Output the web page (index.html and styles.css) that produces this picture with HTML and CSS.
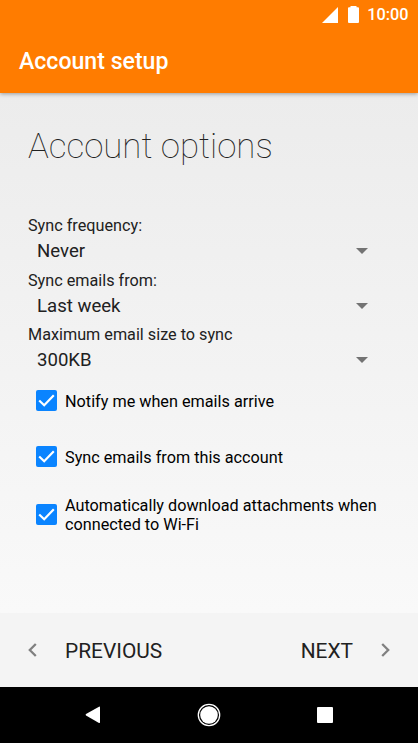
FILE: index.html
```html
<!DOCTYPE html>
<html lang="en">
<head>
<meta charset="utf-8">
<title>Account setup</title>
<link rel="stylesheet" href="styles.css">
</head>
<body>
<div class="screen">
  <header class="appbar">
    <div class="status">
      <svg class="signal" width="16" height="16" viewBox="0 0 16 16"><path d="M0 16 16 0V16Z"/></svg>
      <svg class="battery" width="11" height="17" viewBox="0 0 11 17"><path d="M2.5 0H8.5V1.2H10Q11 1.2 11 2.2V16Q11 17 10 17H1Q0 17 0 16V2.2Q0 1.2 1 1.2H2.5Z"/></svg>
      <span class="clock">10:00</span>
    </div>
    <div class="title"><span>Account setup</span></div>
  </header>
  <main class="content">
    <h1><span>Account options</span></h1>
    <section class="fields">
      <div class="field">
        <div class="label">Sync frequency:</div>
        <div class="select"><span>Never</span><svg width="12" height="6" viewBox="0 0 12 6"><path d="M0 0H12L6 6Z"/></svg></div>
      </div>
      <div class="field">
        <div class="label">Sync emails from:</div>
        <div class="select"><span>Last week</span><svg width="12" height="6" viewBox="0 0 12 6"><path d="M0 0H12L6 6Z"/></svg></div>
      </div>
      <div class="field">
        <div class="label">Maximum email size to sync</div>
        <div class="select"><span>300KB</span><svg width="12" height="6" viewBox="0 0 12 6"><path d="M0 0H12L6 6Z"/></svg></div>
      </div>
    </section>
    <section class="checks">
      <div class="check">
        <svg width="21" height="21" viewBox="0 0 21 21"><rect width="21" height="21" rx="2"/><path d="M3.2 10.5 8.2 15.3 17.8 5.3"/></svg>
        <span>Notify me when emails arrive</span>
      </div>
      <div class="check">
        <svg width="21" height="21" viewBox="0 0 21 21"><rect width="21" height="21" rx="2"/><path d="M3.2 10.5 8.2 15.3 17.8 5.3"/></svg>
        <span>Sync emails from this account</span>
      </div>
      <div class="check tall">
        <svg width="21" height="21" viewBox="0 0 21 21"><rect width="21" height="21" rx="2"/><path d="M3.2 10.5 8.2 15.3 17.8 5.3"/></svg>
        <span>Automatically download attachments when<br>connected to Wi-Fi</span>
      </div>
    </section>
  </main>
  <footer class="actions">
    <div class="action"><svg width="9" height="14" viewBox="0 0 9 14"><path d="M7.8 1 1.8 7 7.8 13"/></svg><span>PREVIOUS</span></div>
    <div class="action"><span>NEXT</span><svg width="9" height="14" viewBox="0 0 9 14"><path d="M1.2 1 7.2 7 1.2 13"/></svg></div>
  </footer>
  <nav class="navbar">
    <svg width="16" height="18" viewBox="0 0 16 18"><path d="M14 .7Q15 .3 15 1.4V16.2Q15 17.3 14 16.9L1 9.5Q.2 8.8 1 8.1Z"/></svg>
    <svg width="24" height="24" viewBox="0 0 24 24"><circle cx="12" cy="12" r="8.8"/><circle class="ring" cx="12" cy="12" r="10.7"/></svg>
    <svg width="16" height="16" viewBox="0 0 16 16"><rect width="16" height="16" rx="1"/></svg>
  </nav>
</div>
</body>
</html>
```
FILE: styles.css
```css
body {
  margin: 0;
  font-family: Roboto, "Liberation Sans", sans-serif;
  color: #212121;
}
svg { display: block; flex: none; }
.screen {
  width: 418px;
  height: 743px;
  display: flex;
  flex-direction: column;
  overflow: hidden;
  background: linear-gradient(#ececec 93px, #f9f9f9 613px);
}
.appbar {
  height: 93px;
  flex: none;
  background: #ff7c00;
  color: #fff;
  box-shadow: 0 1px 4px rgba(0, 0, 0, .35);
}
.status {
  height: 29px;
  display: flex;
  align-items: center;
  justify-content: flex-end;
  padding-right: 9.5px;
  box-sizing: border-box;
}
.status svg { fill: #fff; }
.signal { margin-right: 10px; }
.battery { margin-right: 8.5px; }
.clock { font-size: 16.25px; font-weight: 500; line-height: 29px; }
.title {
  padding-left: 19px;
  font-size: 23.1px;
  font-weight: 500;
  line-height: 65px;
}
.content { flex: 1; }
h1 {
  margin: 30px 0 0 28px;
  font-size: 34.83px;
  font-weight: 100;
  line-height: 48px;
}
.fields { margin-top: 45px; }
.field { height: 54.5px; }
.label {
  padding-left: 28px;
  font-size: 16.22px;
  line-height: 20px;
}
.select {
  display: flex;
  align-items: center;
  justify-content: space-between;
  padding: 0 50px 0 37px;
  font-size: 18.6px;
  line-height: 30px;
}
.select svg { fill: #737373; }
.checks { padding: 0 0 0 36px; margin-top: -7px; }
.check {
  display: flex;
  align-items: center;
  gap: 8px;
  height: 56px;
  color: #000;
  font-size: 16.23px;
  line-height: 19px;
}
.check span { padding-top: 2px; }
.check.tall { height: 59px; }
.check rect { fill: #0a84ff; }
.check path { fill: none; stroke: #fff; stroke-width: 2.2; }
.actions {
  height: 74px;
  flex: none;
  display: flex;
  align-items: center;
  justify-content: space-between;
  padding: 0 28px;
  background: #f4f4f4;
  font-size: 20.9px;
}
.action { display: flex; align-items: center; gap: 28px; }
.action span { padding-top: 2px; }
.action svg { fill: none; stroke: #808080; stroke-width: 2.3; }
.navbar {
  height: 56px;
  flex: none;
  display: flex;
  align-items: center;
  justify-content: space-between;
  padding: 0 85px;
  background: #000;
}
.navbar svg { fill: #fff; }
.navbar .ring { fill: none; stroke: #fff; stroke-width: 1.3; }
```
